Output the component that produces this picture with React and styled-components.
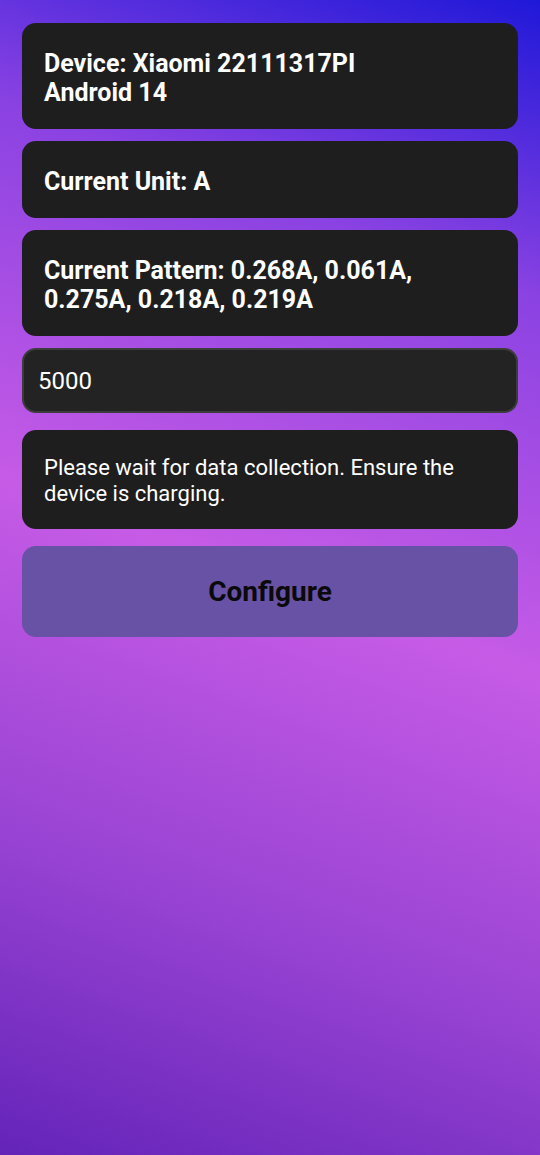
import React from "react";
import styled, { createGlobalStyle } from "styled-components";

const Global = createGlobalStyle`
  html, body { margin: 0; padding: 0; }
  body {
    font-family: Roboto, "Noto Sans", sans-serif;
    background: #6424b8;
  }
  #root { min-height: 1155px; }
`;

const Screen = styled.div`
  min-height: 1155px;
  box-sizing: border-box;
  padding: 23px 22px;
  background: linear-gradient(200deg, #1f18d8 0%, #8a42e2 22%, #c65be6 50%, #9a44d4 75%, #6424b8 100%);
  display: flex;
  flex-direction: column;
`;

const Card = styled.div`
  background: #1e1e1e;
  border-radius: 14px;
  padding: ${(p) => (p.$regular ? "25px 22px 22px" : "26px 22px 22px")};
  margin-bottom: ${(p) => p.$gap || 12}px;
  color: #ffffff;
  font-size: ${(p) => (p.$regular ? 22 : 25)}px;
  font-weight: ${(p) => (p.$regular ? 400 : 700)};
  line-height: ${(p) => (p.$regular ? 26 : 29)}px;
`;

const Input = styled.input`
  box-sizing: border-box;
  width: 100%;
  height: 65px;
  margin-bottom: 17px;
  background: #232323;
  border: 2px solid #3c3c3c;
  border-radius: 14px;
  padding: 0 14px;
  color: #ffffff;
  font-family: Roboto, sans-serif;
  font-size: 24px;
  outline: none;
`;

const Button = styled.button`
  height: 91px;
  width: 100%;
  border: none;
  border-radius: 14px;
  background: #6852a6;
  color: #0a0a0a;
  font-family: Roboto, sans-serif;
  font-weight: 700;
  font-size: 28px;
  cursor: pointer;
`;

export default function App() {
  return (
    <>
      <Global />
      <Screen>
        <Card>
          Device: Xiaomi 22111317PI
          <br />
          Android 14
        </Card>
        <Card>Current Unit: A</Card>
        <Card>Current Pattern: 0.268A, 0.061A, 0.275A, 0.218A, 0.219A</Card>
        <Input defaultValue="5000" />
        <Card $regular $gap={17}>
          Please wait for data collection. Ensure the device is charging.
        </Card>
        <Button>Configure</Button>
      </Screen>
    </>
  );
}
